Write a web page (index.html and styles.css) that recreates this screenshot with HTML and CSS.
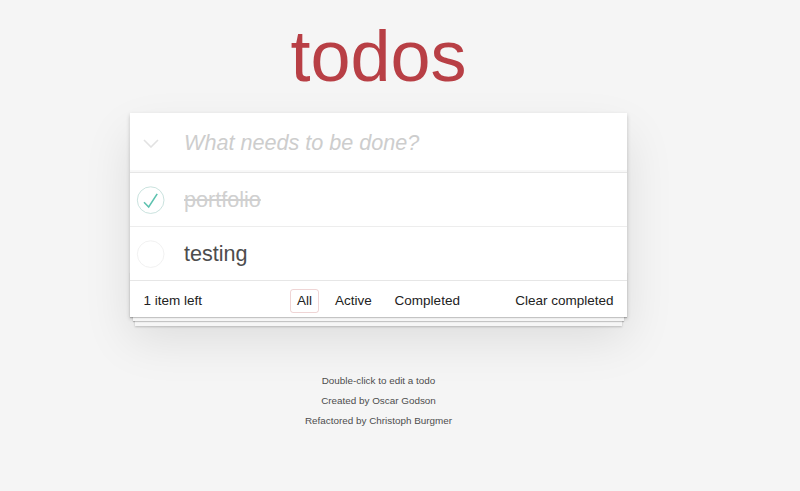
FILE: index.html
```html
<!DOCTYPE html>
<html lang="en">
<head>
<meta charset="utf-8">
<title>todos</title>
<link rel="stylesheet" href="styles.css">
</head>
<body>
<div class="page">
  <h1 class="title">todos</h1>
  <section class="todoapp">
    <header class="header">
      <label class="toggle-all" aria-label="Mark all as complete">
        <svg width="16" height="9" viewBox="0 0 16 9"><polyline points="1,1 8,8 15,1" fill="none" stroke="#e2e2e2" stroke-width="1.6"/></svg>
      </label>
      <input class="new-todo" placeholder="What needs to be done?">
    </header>
    <ul class="todo-list">
      <li class="todo completed">
        <svg class="toggle" width="36" height="36" viewBox="-10 -18 100 135"><circle cx="50" cy="50" r="50" fill="none" stroke="#bddad5" stroke-width="3"/><path fill="#5dc2af" d="M72 25L42 71 27 56l-4 4 20 20 34-52z"/></svg>
        <label class="todo-label">portfolio</label>
      </li>
      <li class="todo">
        <svg class="toggle" width="36" height="36" viewBox="-10 -18 100 135"><circle cx="50" cy="50" r="50" fill="none" stroke="#ededed" stroke-width="3"/></svg>
        <label class="todo-label">testing</label>
      </li>
    </ul>
    <footer class="footer">
      <span class="todo-count"><strong>1</strong> item left</span>
      <ul class="filters">
        <li><a class="filter selected" href="#/">All</a></li>
        <li><a class="filter" href="#/active">Active</a></li>
        <li><a class="filter" href="#/completed">Completed</a></li>
      </ul>
      <button class="clear-completed">Clear completed</button>
    </footer>
  </section>
  <footer class="info">
    <p>Double-click to edit a todo</p>
    <p>Created by <a href="#">Oscar Godson</a></p>
    <p>Refactored by <a href="#">Christoph Burgmer</a></p>
  </footer>
</div>
</body>
</html>
```

FILE: styles.css
```css
html, body {
  margin: 0;
  padding: 0;
}

body {
  background: #f5f5f5;
  color: #4d4d4d;
  font-family: "Liberation Sans", Arial, sans-serif;
  font-size: 12.6px;
  line-height: 1.4;
}

.page {
  width: 757px;
  padding-top: 20px;
}

.title {
  margin: 0;
  font-size: 72px;
  line-height: 72px;
  font-weight: 400;
  text-align: center;
  color: #b83f45;
  margin-bottom: 21px;
}

.todoapp {
  width: 497px;
  margin: 0 auto;
  background: #fff;
  box-shadow: 0 2px 4px 0 rgba(0, 0, 0, 0.2), 0 22px 45px 0 rgba(0, 0, 0, 0.1);
}

.header {
  display: flex;
  align-items: center;
  box-shadow: inset 0 -2px 1px rgba(0, 0, 0, 0.03);
}

.toggle-all {
  flex: none;
  width: 54px;
  height: 59px;
  display: flex;
  align-items: center;
  justify-content: center;
}

.toggle-all svg {
  display: block;
  margin-left: -12px;
  margin-top: 2px;
}

.new-todo {
  flex: 1;
  min-width: 0;
  margin: 0;
  border: none;
  outline: none;
  padding: 14.4px 14.4px 14.4px 0;
  font-family: inherit;
  font-size: 21.6px;
  line-height: 30.2px;
  height: 59px;
  box-sizing: border-box;
  background: transparent;
  color: #4d4d4d;
}

.new-todo::placeholder {
  font-style: italic;
  color: #cdcdcd;
}

.todo-list {
  margin: 0;
  padding: 0;
  list-style: none;
  border-top: 1px solid #e6e6e6;
}

.todo {
  display: flex;
  align-items: center;
  border-bottom: 1px solid #ededed;
  font-size: 21.6px;
}

.todo:last-child {
  border-bottom: none;
}

.toggle {
  flex: none;
  display: block;
}

.todo-label {
  flex: 1;
  display: block;
  padding: 13.5px 13.5px 13.5px 18px;
  line-height: 26px;
  color: #4d4d4d;
}

.todo.completed .todo-label {
  color: #d0d0d0;
  text-decoration: line-through;
}

.footer {
  position: relative;
  display: grid;
  grid-template-columns: 1fr auto 1fr;
  align-items: center;
  height: 18px;
  padding: 8px 13.5px 10px;
  border-top: 1px solid #e6e6e6;
  font-size: 13.5px;
  color: #222;
}

.footer::before {
  content: "";
  position: absolute;
  right: 0;
  bottom: 0;
  left: 0;
  height: 45px;
  overflow: hidden;
  box-shadow: 0 1px 1px rgba(0, 0, 0, 0.2),
    0 7px 0 -3px #f6f6f6,
    0 8px 1px -3px rgba(0, 0, 0, 0.2),
    0 14px 0 -5px #f6f6f6,
    0 15px 2px -5px rgba(0, 0, 0, 0.2);
  z-index: 0;
}

.todo-count,
.filters,
.clear-completed {
  position: relative;
  z-index: 1;
}

.todo-count strong {
  font-weight: 400;
}

.filters {
  display: flex;
  gap: 3.5px;
  margin: 0;
  padding: 0;
  list-style: none;
}

.filter {
  display: block;
  margin: 0 2.7px;
  padding: 2px 6px;
  line-height: 18px;
  color: inherit;
  text-decoration: none;
  border: 1px solid transparent;
  border-radius: 3px;
}

.filter.selected {
  border-color: rgba(175, 47, 47, 0.2);
}

.clear-completed {
  justify-self: end;
  margin: 0;
  padding: 0;
  border: none;
  background: none;
  font-family: inherit;
  font-size: 13.5px;
  line-height: 18px;
  color: inherit;
  cursor: pointer;
}

.info {
  margin-top: 59px;
  text-align: center;
  color: #4d4d4d;
  font-size: 9.9px;
  line-height: 1;
}

.info p {
  margin: 10px 0;
}

.info a {
  color: inherit;
  text-decoration: none;
}
```
